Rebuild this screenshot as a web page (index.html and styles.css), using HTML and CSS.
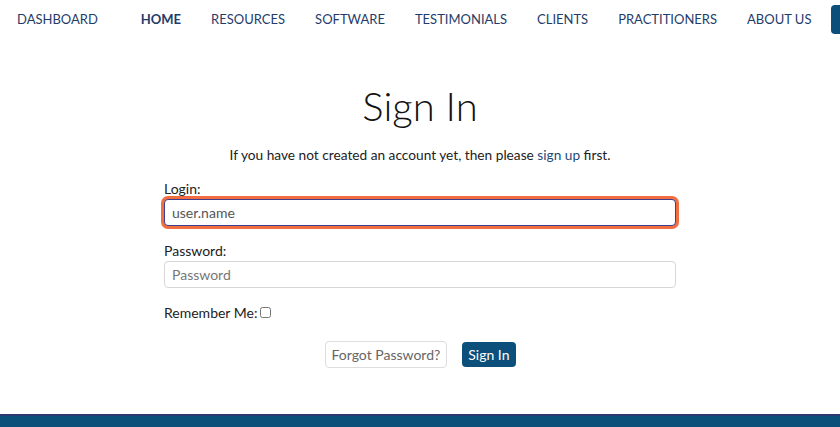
FILE: index.html
```html
<!DOCTYPE html>
<html lang="en">
<head>
    <meta charset="UTF-8">
    <meta name="viewport" content="width=device-width, initial-scale=1.0">
    <title>Sign In</title>
    <link rel="stylesheet" href="styles.css">
</head>
<body>
    <nav class="topnav">
        <a href="#" class="nav-link dashboard">DASHBOARD</a>
        <a href="#" class="nav-link active">HOME</a>
        <a href="#" class="nav-link">RESOURCES</a>
        <a href="#" class="nav-link">SOFTWARE</a>
        <a href="#" class="nav-link">TESTIMONIALS</a>
        <a href="#" class="nav-link">CLIENTS</a>
        <a href="#" class="nav-link">PRACTITIONERS</a>
        <a href="#" class="nav-link last">ABOUT US</a>
        <span class="nav-btn"></span>
    </nav>

    <main class="content">
        <h1>Sign In</h1>
        <p class="intro">If you have not created an account yet, then please <a href="#">sign up</a> first.</p>

        <form class="login-form">
            <div class="form-group">
                <label for="login">Login:</label>
                <input type="text" id="login" name="login" value="user.name" class="focused">
            </div>
            <div class="form-group">
                <label for="password">Password:</label>
                <input type="password" id="password" name="password" placeholder="Password">
            </div>
            <div class="remember">
                <label for="remember">Remember Me:</label>
                <input type="checkbox" id="remember" name="remember">
            </div>
            <div class="actions">
                <a href="#" class="btn btn-light">Forgot Password?</a>
                <button type="submit" class="btn btn-primary">Sign In</button>
            </div>
        </form>
    </main>

    <footer class="footer"></footer>
</body>
</html>
```

FILE: styles.css
```css
html, body {
    height: 100%;
}
body {
    margin: 0;
    font-family: Lato, "Open Sans", sans-serif;
    color: #222;
    background: #fff;
    display: flex;
    flex-direction: column;
    overflow: hidden;
}
.topnav {
    display: flex;
    align-items: center;
    height: 38px;
    padding-left: 17px;
    white-space: nowrap;
}
.nav-link {
    color: #1f3c6a;
    text-decoration: none;
    font-size: 13px;
    margin-right: 30px;
}
.nav-link.dashboard {
    margin-right: 43px;
}
.nav-link.active {
    font-weight: bold;
}
.nav-link.last {
    margin-right: 20px;
}
.nav-btn {
    display: block;
    width: 60px;
    height: 29px;
    background: #0b4f7a;
    border-radius: 4px;
    flex-shrink: 0;
}
.content {
    flex: 1;
}
h1 {
    font-weight: 300;
    font-size: 40px;
    text-align: center;
    margin: 48px 0 0;
    line-height: 40px;
    color: #111;
}
.intro {
    text-align: center;
    font-size: 13.7px;
    margin: 20px 0 0;
}
.intro a {
    color: #1f4b7a;
    text-decoration: none;
}
.login-form {
    width: 512px;
    margin: 17px auto 0;
}
.form-group {
    margin-bottom: 16px;
}
.form-group label {
    display: block;
    font-size: 14px;
    margin-bottom: 2px;
}
.form-group input {
    box-sizing: border-box;
    width: 100%;
    height: 27px;
    border: 1px solid #d6d6d6;
    border-radius: 4px;
    padding: 0 7px;
    font-family: inherit;
    font-size: 14px;
    color: #555;
}
.form-group input::placeholder {
    color: #777;
}
.form-group input.focused {
    border-color: #3b3f8e;
    box-shadow: 0 0 0 3px #f26d40;
    outline: none;
}
.remember {
    display: flex;
    align-items: center;
    font-size: 14px;
}
.remember input {
    width: 11px;
    height: 11px;
    margin: 0 0 0 3px;
}
.actions {
    display: flex;
    justify-content: center;
    align-items: center;
    gap: 15px;
    margin-top: 20px;
}
.btn {
    font-family: inherit;
    font-size: 14px;
    border-radius: 4px;
    text-decoration: none;
    box-sizing: border-box;
    display: flex;
    align-items: center;
}
.btn-light {
    height: 27px;
    padding: 0 6px;
    color: #666;
    border: 1px solid #ddd;
    background: #fff;
}
.btn-primary {
    height: 25px;
    padding: 0 6px;
    color: #fff;
    border: 0;
    background: #0b4f7a;
}
.footer {
    height: 11px;
    border-top: 2px solid #2b3a70;
    background: #0b5079;
}
```
